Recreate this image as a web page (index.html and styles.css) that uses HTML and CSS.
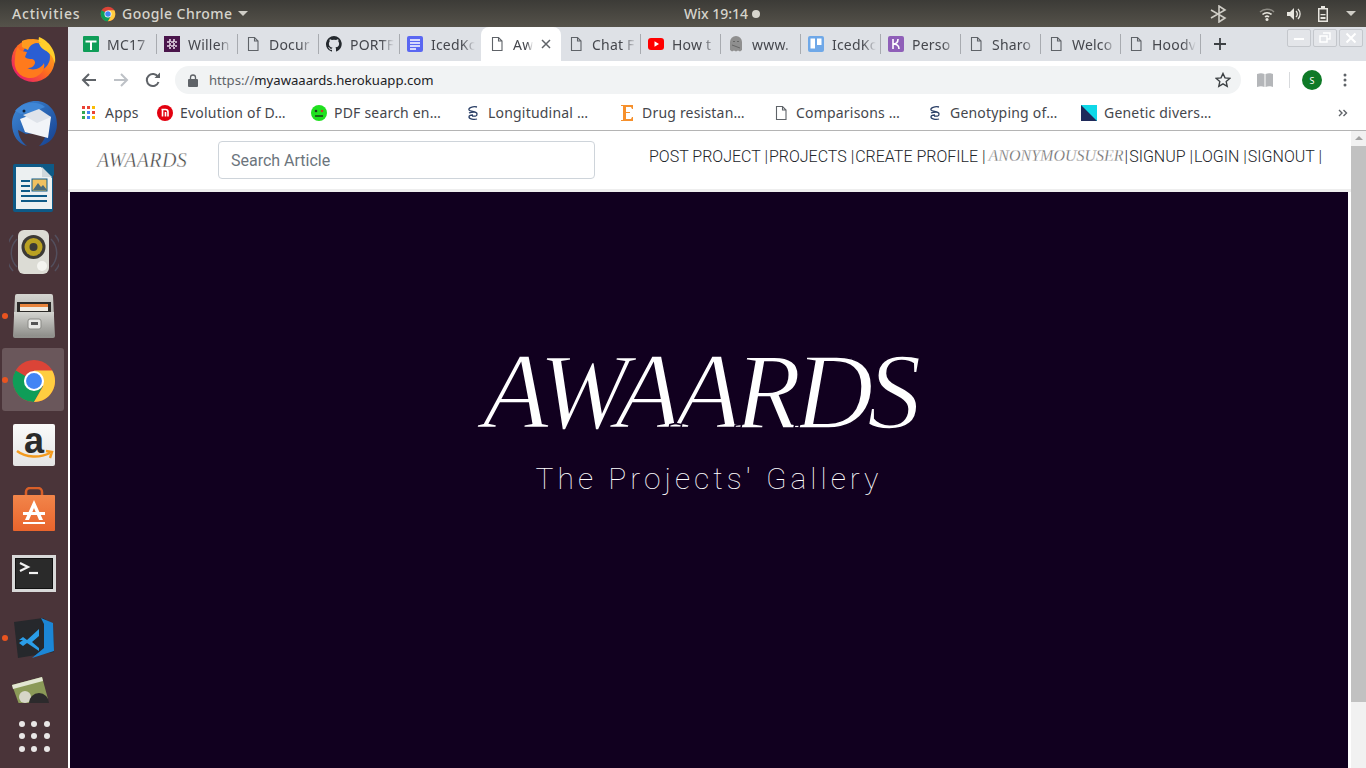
FILE: index.html
```html
<!DOCTYPE html>
<html lang="en">

<head>
    <meta charset="UTF-8" />
    <title>Awaards</title>
    <link rel="stylesheet" href="styles.css">
</head>

<body>
    <svg class="defs" width="0" height="0">
        <defs>
            <symbol id="page" viewBox="0 0 16 16">
                <path d="M3.500 1.500h6l3.500 3.500v9.500h-9.500z M9.500 1.500v3.500h3.500" fill="#fff" fill-opacity="0" stroke="#5f6368" stroke-width="1.100" />
            </symbol>
            <symbol id="dna" viewBox="0 0 16 16">
                <path d="M12 2C8 1 3 3 4 5s8 1 8 4-3 2-5 2M4 8c2-1 3-1 5-1M12 14c-3 1-8 0-8-2s2-2 4-2" fill="none" stroke="#2a3f66" stroke-width="1.300" />
            </symbol>
            <symbol id="chrome" viewBox="0 0 48 48">
                <circle cx="24" cy="24" r="22" fill="#db4437" />
                <path d="M24 24L4.900 13A22 22 0 0 0 24 46L35 26z" fill="#0f9d58" />
                <path d="M24 13h19A22 22 0 0 1 24 46L33.500 29.500z" fill="#ffcd40" />
                <circle cx="24" cy="24" r="10.500" fill="#fff" />
                <circle cx="24" cy="24" r="8.300" fill="#4285f4" />
            </symbol>
            <linearGradient id="ffBase" x1="0.900" y1="0.100" x2="0.100" y2="0.900">
                <stop offset="0" stop-color="#ffb01f" />
                <stop offset="0.500" stop-color="#ff6a1f" />
                <stop offset="1" stop-color="#e5196e" />
            </linearGradient>
            <linearGradient id="tbBird" x1="0" y1="0" x2="1" y2="1">
                <stop offset="0" stop-color="#3f8ad8" />
                <stop offset="1" stop-color="#153f8e" />
            </linearGradient>
            <linearGradient id="metal" x1="0" y1="0" x2="0" y2="1">
                <stop offset="0" stop-color="#d4d4d0" />
                <stop offset="1" stop-color="#8f8f8b" />
            </linearGradient>
            <linearGradient id="store" x1="0" y1="0" x2="0" y2="1">
                <stop offset="0" stop-color="#f2854a" />
                <stop offset="1" stop-color="#e9642c" />
            </linearGradient>
        </defs>
    </svg>

    <!-- Barre du haut -->
    <header class="topbar">
        <span class="activities">Activities</span>
        <span class="app-menu">
            <svg class="app-icon" width="16" height="16"><use href="#chrome" /></svg>
            Google Chrome
            <span class="caret"></span>
        </span>
        <span class="clock">Wix 19:14 <span class="clock-dot"></span></span>
        <span class="tray">
            <svg width="18" height="18" viewBox="0 0 18 18" class="tray-bt"><path d="M1 5l14 8-6 4V1l6 4-14 8" fill="none" stroke="#cfcdc6" stroke-width="1.600" /></svg>
            <svg width="16" height="16" viewBox="0 0 16 16" class="tray-wifi"><path d="M1 6a10 10 0 0 1 14 0" fill="none" stroke="#8d8b84" stroke-width="1.500" /><path d="M3.500 8.500a6.500 6.500 0 0 1 9 0M6 11a3 3 0 0 1 4 0" fill="none" stroke="#e8e6df" stroke-width="1.500" /><circle cx="8" cy="13.500" r="1.500" fill="#e8e6df" /></svg>
            <svg width="16" height="16" viewBox="0 0 16 16" class="tray-vol"><path d="M1 6h3l4-4v12l-4-4H1z" fill="#e8e6df" /><path d="M10 5a4 4 0 0 1 0 6M12 3a7 7 0 0 1 0 10" fill="none" stroke="#e8e6df" stroke-width="1.300" /></svg>
            <svg width="14" height="16" viewBox="0 0 14 16" class="tray-bat"><path d="M5 0h4v2h3v14H2V2h3z M3.500 3.500v11h7v-11z" fill="#e8e6df" fill-rule="evenodd" /><path d="M4.500 8h5v1.300h-5zM4.500 11h5v2h-5z" fill="#e8e6df" /></svg>
            <span class="caret"></span>
        </span>
    </header>

    <div class="desktop">
        <!-- Dock -->
        <nav class="dock">
            <div class="dock-item">
                <svg width="48" height="48" viewBox="0 0 48 48">
                    <circle cx="23" cy="25.500" r="21.500" fill="url(#ffBase)" />
                    <circle cx="26" cy="22" r="14" fill="#2a5ed3" />
                    <path d="M29 2c10 4 18 14 16 27-2-9-7-12-12-15-4-3-5-8-4-12z" fill="#ffcf2b" />
                    <path d="M8 12c2 5 5 4 9 5l-2 5c3 3 7 1 9 3 3 3-1 9-7 8 6 3 14 1 17-5 2 7-5 15-14 15C10 43 3 34 5 24c0-5 1-9 3-12z" fill="#ff7a1c" />
                    <path d="M12 6c6-3 14-2 19 2-7-1-11 2-13 7l-6-3z" fill="#ff9a1f" />
                </svg>
            </div>
            <div class="dock-item">
                <svg width="50" height="50" viewBox="0 0 50 50">
                    <path d="M3 26C3 12 14 3 27 3c12 0 21 10 21 23 0 12-8 21-18 22 5-5 7-10 7-14l-20 2-8-4c1 8 5 13 9 16C9 46 3 37 3 26z" fill="url(#tbBird)" />
                    <path d="M6 13c7-9 22-11 30-4l-12 5-12 2z" fill="#3f86d6" />
                    <path d="M11 21l19-7 4 2 8 3-3 21-23-6z" fill="#f2f4f8" />
                    <path d="M14 17l16-6 12 8-14 6z" fill="#dfe3ea" />
                    <circle cx="15" cy="13" r="1.500" fill="#10243f" />
                </svg>
            </div>
            <div class="dock-item">
                <svg width="42" height="48" viewBox="0 0 42 48">
                    <path d="M2 0h38a2 2 0 0 1 0 0v46a2 2 0 0 1-2 2H2a2 2 0 0 1-2-2V2a2 2 0 0 1 2-2z" fill="#0e5a87" />
                    <path d="M29 0h12v12z" fill="#0e5a87" />
                    <path d="M3 3h25l11 11v31H3z" fill="#ecf0f1" />
                    <path d="M29 3v10h10" fill="#cfd8dc" />
                    <path d="M8 16h9v2H8zM8 21h9v2H8zM8 26h9v2H8zM8 31h26v2H8zM8 36h26v2H8z" fill="#0e5a87" />
                    <rect x="19" y="15" width="15" height="12" fill="#f0c060" stroke="#0e5a87" />
                    <path d="M20 26l5-7 3 4 2-2 4 5z" fill="#4a6a7a" />
                </svg>
            </div>
            <div class="dock-item">
                <svg width="50" height="50" viewBox="0 0 50 50">
                    <path d="M8 12a20 20 0 0 0 0 28M42 12a20 20 0 0 1 0 28M4 8a28 28 0 0 0 0 36M46 8a28 28 0 0 1 0 36" fill="none" stroke="#5c6a82" stroke-width="1.500" stroke-opacity="0.500" />
                    <rect x="9" y="3" width="31" height="44" rx="6" fill="#dcdcd5" />
                    <circle cx="24.500" cy="20" r="12" fill="#3c3a36" />
                    <circle cx="24.500" cy="20" r="9" fill="#b9a122" />
                    <circle cx="24.500" cy="20" r="4" fill="#3c3a36" />
                    <circle cx="33" cy="39" r="5" fill="#f4f4f0" />
                </svg>
            </div>
            <div class="dock-item">
                <span class="running"></span>
                <svg width="42" height="44" viewBox="0 0 42 44">
                    <path d="M2 2a2 2 0 0 1 2-2h34a2 2 0 0 1 2 2l2 40a2 2 0 0 1-2 2H2a2 2 0 0 1-2-2z" fill="url(#metal)" />
                    <rect x="4" y="8" width="34" height="12" fill="#2c2a28" />
                    <rect x="7" y="10" width="28" height="3" fill="#e8843c" />
                    <rect x="7" y="13" width="28" height="4" fill="#f0ece4" />
                    <path d="M1 18h40v24H1z" fill="url(#metal)" />
                    <rect x="15" y="25" width="13" height="10" rx="2" fill="#e9e9e6" stroke="#8a8a86" />
                    <rect x="18" y="28" width="7" height="3" fill="#555" />
                </svg>
            </div>
            <div class="dock-item dock-active">
                <span class="running"></span>
                <svg width="46" height="46"><use href="#chrome" /></svg>
            </div>
            <div class="dock-item">
                <div class="amazon"><span class="amazon-a">a</span>
                    <svg width="40" height="12" viewBox="0 0 40 12" class="amazon-smile"><path d="M2 2c9 7 23 7 33 2M31 2l6 1-2 6" fill="none" stroke="#f39a1e" stroke-width="2.400" /></svg>
                </div>
            </div>
            <div class="dock-item">
                <svg width="42" height="44" viewBox="0 0 42 44">
                    <path d="M13 9V5a4 4 0 0 1 4-4h8a4 4 0 0 1 4 4v4" fill="none" stroke="#d95f28" stroke-width="2.500" />
                    <rect y="8" width="42" height="36" rx="1" fill="url(#store)" />
                    <path d="M21 13l9 20h-4l-5-12-5 12h-4z" fill="#fff" />
                    <rect x="10" y="25" width="22" height="3" fill="#fff" />
                    <rect x="10" y="35" width="22" height="2" fill="#fff" />
                </svg>
            </div>
            <div class="dock-item">
                <div class="terminal">
                    <svg width="36" height="27" viewBox="0 0 36 27"><path d="M5 5l8 4-8 4" fill="none" stroke="#f2f2f2" stroke-width="2.200" /><path d="M14 15h9" stroke="#f2f2f2" stroke-width="2.200" /></svg>
                </div>
            </div>
            <div class="dock-item">
                <span class="running"></span>
                <svg width="44" height="44" viewBox="0 0 44 44">
                    <path d="M2 6l29-4 10 6 1 28-36 6z" fill="#26282c" />
                    <path d="M29 2l12 5 1 28-22 7 12-10V8z" fill="#1c86d6" />
                    <path d="M7 24l4-3 4 3 12-11v7l-7 6 7 6v3l-12-8-4 3-4-3 4-3z" fill="#2a9de8" />
                </svg>
            </div>
            <div class="dock-photos">
                <svg width="38" height="30" viewBox="0 0 38 30">
                    <path d="M0 8l30-8 6 22-10 8H8z" fill="#8b9a58" />
                    <path d="M0 8l30-8 1 4L1 12z" fill="#e2e6d2" />
                    <circle cx="13" cy="20" r="6" fill="#d6d6c8" />
                    <circle cx="27" cy="26" r="10" fill="#2c2a2c" />
                </svg>
            </div>
            <div class="dock-apps">
                <span></span><span></span><span></span>
                <span></span><span></span><span></span>
                <span></span><span></span><span></span>
            </div>
        </nav>

        <div class="browser">
            <!-- Onglets -->
            <div class="tabstrip">
                <div class="tab">
                    <svg width="16" height="16" viewBox="0 0 16 16"><rect width="16" height="16" rx="1" fill="#0f9d58" /><path d="M2.500 4.500h11v2h-4.500V14h-2V6.500H2.500z" fill="#fff" /></svg>
                    <span class="tab-title">MC17</span>
                </div>
                <div class="tab">
                    <svg width="16" height="16" viewBox="0 0 16 16"><rect width="16" height="16" fill="#4a154b" /><path d="M6 3v10M10 3v10M3 6h10M3 10h10" stroke="#e8d8e8" stroke-width="1.600" stroke-dasharray="3 1" /></svg>
                    <span class="tab-title">Willen</span>
                </div>
                <div class="tab">
                    <svg width="16" height="16"><use href="#page" /></svg>
                    <span class="tab-title">Docur</span>
                </div>
                <div class="tab">
                    <svg width="16" height="16" viewBox="0 0 16 16"><path d="M8 0a8 8 0 0 0-2.500 15.600c.4.100.5-.2.500-.4v-1.400c-2.200.5-2.700-1-2.700-1-.4-.9-.9-1.200-.9-1.200-.7-.5.100-.5.100-.5.800.1 1.200.8 1.200.8.700 1.200 1.900.9 2.300.7.100-.5.300-.9.500-1.100-1.800-.2-3.600-.9-3.600-4 0-.9.300-1.600.8-2.100-.1-.2-.4-1 .1-2.100 0 0 .7-.2 2.200.8a7.600 7.600 0 0 1 4 0c1.500-1 2.200-.8 2.200-.8.400 1.100.2 1.900.1 2.100.5.600.8 1.300.8 2.100 0 3.100-1.900 3.700-3.700 3.900.3.300.6.800.6 1.500v2.200c0 .2.100.5.500.4A8 8 0 0 0 8 0z" fill="#24292e" /></svg>
                    <span class="tab-title">PORTF</span>
                </div>
                <div class="tab tab-before-active">
                    <svg width="16" height="16" viewBox="0 0 16 16"><rect width="16" height="16" rx="2" fill="#5a67f2" /><path d="M3 4h10M3 7h10M3 10h10M3 13h6" stroke="#fff" stroke-width="1.400" /></svg>
                    <span class="tab-title">IcedKc</span>
                </div>
                <div class="tab tab-active">
                    <svg width="16" height="16"><use href="#page" /></svg>
                    <span class="tab-title">Aw</span>
                    <svg class="tab-close" width="10" height="10" viewBox="0 0 10 10"><path d="M1 1l8 8M9 1l-8 8" stroke="#5f6368" stroke-width="1.500" /></svg>
                </div>
                <div class="tab">
                    <svg width="16" height="16"><use href="#page" /></svg>
                    <span class="tab-title">Chat F</span>
                </div>
                <div class="tab">
                    <svg width="16" height="16" viewBox="0 0 16 16"><rect y="2" width="16" height="12" rx="3" fill="#f00" /><path d="M6.500 5.300v5.400L11 8z" fill="#fff" /></svg>
                    <span class="tab-title">How t</span>
                </div>
                <div class="tab">
                    <svg width="16" height="16" viewBox="0 0 16 16"><path d="M2 6a6 6 0 0 1 12 0v8l-2 1.500-2-1-2 1-2-1-2 1-2-1.500z" fill="#8f8f8f" /><path d="M5 5.500h2M9 5.500h2M4 9l8 3" stroke="#666" /></svg>
                    <span class="tab-title">www.</span>
                </div>
                <div class="tab">
                    <svg width="16" height="16" viewBox="0 0 16 16"><rect width="16" height="16" rx="2" fill="#6fa8e8" /><rect x="2.500" y="2.500" width="4.500" height="10" fill="#fff" /><rect x="9" y="2.500" width="4.500" height="6.500" fill="#fff" /></svg>
                    <span class="tab-title">IcedKc</span>
                </div>
                <div class="tab">
                    <svg width="16" height="16" viewBox="0 0 16 16"><rect width="16" height="16" rx="2" fill="#8f5fb8" /><path d="M5 3v10M5 8c3 0 5-1 5-5M5 8c3 0 6 1 6 5" fill="none" stroke="#fff" stroke-width="1.600" /></svg>
                    <span class="tab-title">Perso</span>
                </div>
                <div class="tab">
                    <svg width="16" height="16"><use href="#page" /></svg>
                    <span class="tab-title">Sharo</span>
                </div>
                <div class="tab">
                    <svg width="16" height="16"><use href="#page" /></svg>
                    <span class="tab-title">Welco</span>
                </div>
                <div class="tab">
                    <svg width="16" height="16"><use href="#page" /></svg>
                    <span class="tab-title">Hoodv</span>
                </div>
                <svg class="new-tab" width="12" height="12" viewBox="0 0 12 12"><path d="M6 0v12M0 6h12" stroke="#3c4043" stroke-width="1.800" /></svg>
                <div class="window-btns">
                    <span class="win-btn"><svg width="12" height="12" viewBox="0 0 12 12"><path d="M1 7h10" stroke="#fff" stroke-width="2" /></svg></span>
                    <span class="win-btn"><svg width="12" height="12" viewBox="0 0 12 12"><path d="M4 1h7v6H8M1 4h7v6H1z" fill="none" stroke="#fff" stroke-width="1.500" /></svg></span>
                    <span class="win-btn"><svg width="12" height="12" viewBox="0 0 12 12"><path d="M1.500 1.500l9 9M10.500 1.500l-9 9" stroke="#fff" stroke-width="2" /></svg></span>
                </div>
            </div>

            <!-- Barre d'adresse -->
            <div class="toolbar">
                <svg class="tool-back" width="16" height="16" viewBox="0 0 16 16"><path d="M15 8H2M8 2L2 8l6 6" fill="none" stroke="#5f6368" stroke-width="2" /></svg>
                <svg class="tool-forward" width="16" height="16" viewBox="0 0 16 16"><path d="M1 8h13M8 2l6 6-6 6" fill="none" stroke="#bdc1c6" stroke-width="2" /></svg>
                <svg class="tool-reload" width="16" height="16" viewBox="0 0 16 16"><path d="M13.500 10a6 6 0 1 1-.5-5" fill="none" stroke="#5f6368" stroke-width="2" /><path d="M9.500 6H15V.5z" fill="#5f6368" /></svg>
                <div class="omnibox">
                    <svg width="10" height="13" viewBox="0 0 10 13"><path d="M2.500 5V3.500a2.500 2.500 0 0 1 5 0V5" fill="none" stroke="#5f6368" stroke-width="1.300" /><rect y="5" width="10" height="8" rx="1" fill="#5f6368" /></svg>
                    <span class="url"><span class="url-scheme">https://</span>myawaaards.herokuapp.com</span>
                    <svg class="star" width="16" height="16" viewBox="0 0 16 16"><path d="M8 1.500l2 4.400 4.800.5-3.600 3.200 1 4.700L8 11.900l-4.200 2.400 1-4.700L1.200 6.400 6 5.900z" fill="none" stroke="#3c4043" stroke-width="1.400" /></svg>
                </div>
                <svg class="tool-book" width="16" height="14" viewBox="0 0 16 14"><path d="M0 1c3-1 5-1 7.500 0v13C5 13 3 13 0 14zM8.500 1c2.500-1 4.500-1 7.500 0v13c-3-1-5-1-7.500 0z" fill="#b4b6b9" /></svg>
                <span class="tool-divider"></span>
                <span class="avatar">S</span>
                <svg class="tool-menu" width="4" height="14" viewBox="0 0 4 14"><circle cx="2" cy="2" r="1.500" fill="#5f6368" /><circle cx="2" cy="7" r="1.500" fill="#5f6368" /><circle cx="2" cy="12" r="1.500" fill="#5f6368" /></svg>
            </div>

            <!-- Favoris -->
            <div class="bookmarks">
                <div class="bm bm-apps">
                    <svg width="13" height="13" viewBox="0 0 13 13">
                        <rect width="3" height="3" fill="#ea4335" /><rect x="5" width="3" height="3" fill="#ea4335" /><rect x="10" width="3" height="3" fill="#fbbc05" />
                        <rect y="5" width="3" height="3" fill="#34a853" /><rect x="5" y="5" width="3" height="3" fill="#4285f4" /><rect x="10" y="5" width="3" height="3" fill="#ea4335" />
                        <rect y="10" width="3" height="3" fill="#34a853" /><rect x="5" y="10" width="3" height="3" fill="#4285f4" /><rect x="10" y="10" width="3" height="3" fill="#fbbc05" />
                    </svg>
                    <span>Apps</span>
                </div>
                <div class="bm">
                    <svg width="16" height="16" viewBox="0 0 16 16"><circle cx="8" cy="8" r="8" fill="#e3000f" /><path d="M4.500 4.500h4a2.500 2.500 0 0 1 2.500 2.500v4.500M5.500 4.500v7M8.500 7v4.500" fill="none" stroke="#fff" stroke-width="1.600" /></svg>
                    <span>Evolution of D…</span>
                </div>
                <div class="bm">
                    <svg width="16" height="16" viewBox="0 0 16 16"><circle cx="8" cy="8" r="8" fill="#1fe01f" /><circle cx="5" cy="6" r="1.300" fill="#1a3a1a" /><circle cx="11" cy="6" r="1.300" fill="#c0392b" /><path d="M4 11h8" stroke="#1a3a1a" stroke-width="1.500" /></svg>
                    <span>PDF search en…</span>
                </div>
                <div class="bm">
                    <svg width="16" height="16"><use href="#dna" /></svg>
                    <span>Longitudinal …</span>
                </div>
                <div class="bm">
                    <svg width="16" height="18" viewBox="0 0 16 18"><path d="M2 1h12v4h-1l-1-2H7v5h4v1H7v6h5l1-2h1v4H2v-1h2V2H2z" fill="#f6902c" /></svg>
                    <span>Drug resistan…</span>
                </div>
                <div class="bm">
                    <svg width="16" height="16"><use href="#page" /></svg>
                    <span>Comparisons …</span>
                </div>
                <div class="bm">
                    <svg width="16" height="16"><use href="#dna" /></svg>
                    <span>Genotyping of…</span>
                </div>
                <div class="bm">
                    <svg width="16" height="16" viewBox="0 0 16 16"><rect width="16" height="16" fill="#1f2a5a" /><path d="M0 0h16v16z" fill="#0fd8e8" /></svg>
                    <span>Genetic divers…</span>
                </div>
                <svg class="bm-more" width="10" height="8" viewBox="0 0 10 8"><path d="M1 1l3 3-3 3M5.500 1l3 3-3 3" fill="none" stroke="#5f6368" stroke-width="1.400" /></svg>
            </div>

            <!-- Contenu de la page -->
            <div class="viewport">
                <main class="site">
                    <div class="site-nav">
                        <a class="brand">AWAARDS</a>
                        <input class="search" type="text" placeholder="Search Article" />
                        <ul class="links">
                            <li>POST PROJECT |</li>
                            <li>PROJECTS |</li>
                            <li>CREATE PROFILE |</li>
                            <li class="user">ANONYMOUSUSER</li>
                            <li>|</li>
                            <li>SIGNUP |</li>
                            <li>LOGIN |</li>
                            <li>SIGNOUT |</li>
                        </ul>
                    </div>
                    <section class="hero">
                        <h1 class="hero-title">AWAARDS</h1>
                        <p class="hero-sub">The Projects' Gallery</p>
                    </section>
                </main>
                <div class="scrollbar">
                    <span class="scroll-up"></span>
                    <span class="scroll-thumb"></span>
                </div>
            </div>
        </div>
    </div>
</body>

</html>
```

FILE: styles.css
```css
html,
body {
    margin: 0;
    height: 768px;
    overflow: hidden;
}

body {
    font-family: "Noto Sans", sans-serif;
    background: #4a3439;
}

.defs {
    position: absolute;
}

/* Barre du haut */
.topbar {
    height: 27px;
    display: flex;
    align-items: center;
    position: relative;
    background: linear-gradient(#3c3b37, #55524a);
    color: #d6d4cc;
    font-size: 14px;
    font-weight: 500;
}

.activities {
    margin-left: 12px;
    width: 88px;
    letter-spacing: 0.8px;
}

.app-menu {
    display: flex;
    align-items: center;
    gap: 6px;
    letter-spacing: 0.45px;
}

.caret {
    width: 0;
    height: 0;
    border-left: 5px solid transparent;
    border-right: 5px solid transparent;
    border-top: 5px solid #cfcdc6;
}

.clock {
    position: absolute;
    left: 684px;
    display: flex;
    align-items: center;
    gap: 4px;
}

.clock-dot {
    width: 8px;
    height: 8px;
    border-radius: 50%;
    background: #d6d4cc;
}

.tray {
    margin-left: auto;
    margin-right: 10px;
    display: flex;
    align-items: center;
}

.tray-bt {
    margin-right: 31px;
}

.tray-wifi {
    margin-right: 11px;
}

.tray-vol {
    margin-right: 14px;
}

.tray-bat {
    margin-right: 16px;
}

.desktop {
    display: flex;
    height: 741px;
}

/* Dock */
.dock {
    width: 68px;
    flex: none;
    display: flex;
    flex-direction: column;
}

.dock-item {
    height: 64.3px;
    display: flex;
    align-items: center;
    justify-content: center;
    position: relative;
    flex: none;
}

.dock-active::before {
    content: "";
    position: absolute;
    left: 2px;
    right: 4px;
    top: 0;
    bottom: 2px;
    background: #6a575b;
    border-radius: 3px;
}

.dock-item svg,
.dock-item .amazon,
.dock-item .terminal {
    position: relative;
}

.running {
    position: absolute;
    left: 2px;
    top: 29px;
    width: 6px;
    height: 6px;
    border-radius: 50%;
    background: #e95420;
    z-index: 1;
}

.amazon {
    width: 42px;
    height: 42px;
    background: linear-gradient(#fafafa, #e4e4e4);
    border-radius: 2px;
    display: flex;
    justify-content: center;
}

.amazon-a {
    font-family: "Liberation Sans", sans-serif;
    font-weight: 700;
    font-size: 36px;
    line-height: 34px;
    color: #2a2a2a;
}

.amazon-smile {
    position: absolute !important;
    left: 2px;
    top: 25px;
}

.terminal {
    width: 38px;
    height: 31px;
    background: #2a2a2a;
    border: 3px solid #d8d8d8;
    box-shadow: inset 0 0 0 1px #111;
}

.dock-photos {
    height: 33px;
    flex: none;
    box-sizing: border-box;
    padding: 7px 0 0 12px;
    overflow: hidden;
}

.dock-apps {
    display: grid;
    grid-template-columns: repeat(3, 6px);
    gap: 6.5px;
    justify-content: center;
    margin-top: 18px;
}

.dock-apps span {
    width: 6px;
    height: 6px;
    border-radius: 50%;
    background: #e9e6e6;
}

/* Navigateur */
.browser {
    flex: 1;
    min-width: 0;
    display: flex;
    flex-direction: column;
    background: #fff;
}

.tabstrip {
    height: 34px;
    flex: none;
    background: #dee1e6;
    display: flex;
    align-items: center;
    padding-left: 8px;
    position: relative;
}

.tab {
    width: 80px;
    height: 34px;
    flex: none;
    box-sizing: border-box;
    padding-left: 7px;
    display: flex;
    align-items: center;
    gap: 8px;
    position: relative;
}

.tab:nth-child(-n+5) {
    width: 81px;
}

.tab::after {
    content: "";
    position: absolute;
    right: 0;
    top: 7px;
    height: 20px;
    width: 1px;
    background: #a8abb0;
}

.tab-active {
    background: #fff;
    border-radius: 8px 8px 0 0;
    padding-left: 8px;
}

.tab-active::after,
.tab-before-active::after {
    display: none;
}

.tab-title {
    font-size: 14px;
    letter-spacing: 0.2px;
    color: #45474d;
    width: 44px;
    white-space: nowrap;
    -webkit-mask-image: linear-gradient(to right, #000 70%, transparent);
    mask-image: linear-gradient(to right, #000 70%, transparent);
}

.tab-active .tab-title {
    width: 20px;
}

.tab-close {
    margin-left: 0;
}

.new-tab {
    margin-left: 13px;
}

.window-btns {
    position: absolute;
    right: 3px;
    top: 2px;
    display: flex;
    gap: 2px;
}

.win-btn {
    width: 22px;
    height: 16px;
    border: 1px solid #c4c7cc;
    border-radius: 2px;
    display: flex;
    align-items: center;
    justify-content: center;
    background: rgba(255, 255, 255, 0.15);
}

.toolbar {
    height: 34px;
    flex: none;
    display: flex;
    align-items: center;
    position: relative;
    padding: 5px 0 1px;
    box-sizing: border-box;
}

.tool-back {
    margin-left: 13px;
}

.tool-forward {
    margin-left: 16px;
}

.tool-reload {
    margin-left: 16px;
}

.omnibox {
    width: 1066px;
    height: 28px;
    margin-left: 14px;
    background: #f1f3f4;
    border-radius: 14px;
    display: flex;
    align-items: center;
    padding: 0 10px 0 13px;
    box-sizing: border-box;
    flex: none;
}

.url {
    margin-left: 11px;
    font-size: 13.15px;
    color: #202124;
}

.url-scheme {
    color: #5f6368;
}

.star {
    margin-left: auto;
}

.tool-book {
    margin-left: 16px;
}

.tool-divider {
    width: 1px;
    height: 16px;
    background: #d8dadd;
    margin-left: 16px;
}

.avatar {
    width: 20px;
    height: 20px;
    border-radius: 50%;
    background: #0f7a27;
    color: #fff;
    font-size: 9px;
    display: flex;
    align-items: center;
    justify-content: center;
    margin-left: 12px;
}

.tool-menu {
    margin-left: 21px;
}

.bookmarks {
    height: 36px;
    flex: none;
    display: flex;
    align-items: center;
    box-sizing: border-box;
    border-bottom: 1px solid #b4b4b4;
    padding-left: 14px;
    position: relative;
}

.bm {
    width: 154px;
    flex: none;
    display: flex;
    align-items: center;
    gap: 7px;
    font-size: 14px;
    letter-spacing: 0.2px;
    color: #45474d;
    white-space: nowrap;
}

.bm-apps {
    width: 75px;
    gap: 10px;
}

.bm-more {
    position: absolute;
    left: 1270px;
    top: 14px;
}

/* Page du site */
.viewport {
    flex: 1;
    display: flex;
    min-height: 0;
}

.site {
    flex: 1;
    min-width: 0;
    display: flex;
    flex-direction: column;
}

.site-nav {
    height: 58px;
    flex: none;
    display: flex;
    align-items: center;
    padding-left: 29px;
    border-bottom: 3px solid #eeeeee;
}

.brand {
    font-family: "Liberation Serif", serif;
    font-style: italic;
    font-size: 20px;
    letter-spacing: 0.3px;
    color: #444;
    -webkit-text-stroke: 0.4px #fff;
    width: 121px;
}

.search {
    width: 377px;
    height: 38px;
    box-sizing: border-box;
    padding: 0 12px;
    font-family: Roboto, sans-serif;
    font-size: 16px;
    border: 1px solid #ced4da;
    border-radius: 4px;
    outline: none;
}

.search::placeholder {
    color: #6c757d;
}

.links {
    list-style: none;
    margin: -8px 0 0 54px;
    padding: 0;
    display: flex;
    gap: 1px;
    font-family: Roboto, sans-serif;
    font-weight: 300;
    font-size: 16px;
    color: #212529;
    white-space: nowrap;
}

.user {
    font-family: "Liberation Serif", serif;
    font-style: italic;
    font-size: 16px;
    color: #666;
    -webkit-text-stroke: 0.3px #fff;
    margin-left: 2px;
}

.hero {
    flex: 1;
    margin: 0 3px 0 2px;
    background: #11001f;
    display: flex;
    flex-direction: column;
    align-items: center;
    padding-top: 140px;
    box-sizing: border-box;
}

.hero-title {
    margin: 0 20px 0 0;
    font-family: "Liberation Serif", serif;
    font-style: italic;
    font-weight: 400;
    font-size: 108px;
    line-height: 120px;
    letter-spacing: -6px;
    color: #fff;
    -webkit-text-stroke: 1.6px #11001f;
}

.hero-sub {
    margin: 9px 0 0;
    font-family: Roboto, sans-serif;
    font-weight: 100;
    font-size: 30px;
    letter-spacing: 4px;
    color: #fff;
}

.scrollbar {
    width: 15px;
    flex: none;
    background: #f1f1f1;
    display: flex;
    flex-direction: column;
}

.scroll-up {
    height: 15px;
    position: relative;
}

.scroll-up::before {
    content: "";
    position: absolute;
    left: 4px;
    top: 5px;
    border-left: 4px solid transparent;
    border-right: 4px solid transparent;
    border-bottom: 4px solid #a3a3a3;
}

.scroll-thumb {
    height: 556px;
    background: #c1c1c1;
}
```
